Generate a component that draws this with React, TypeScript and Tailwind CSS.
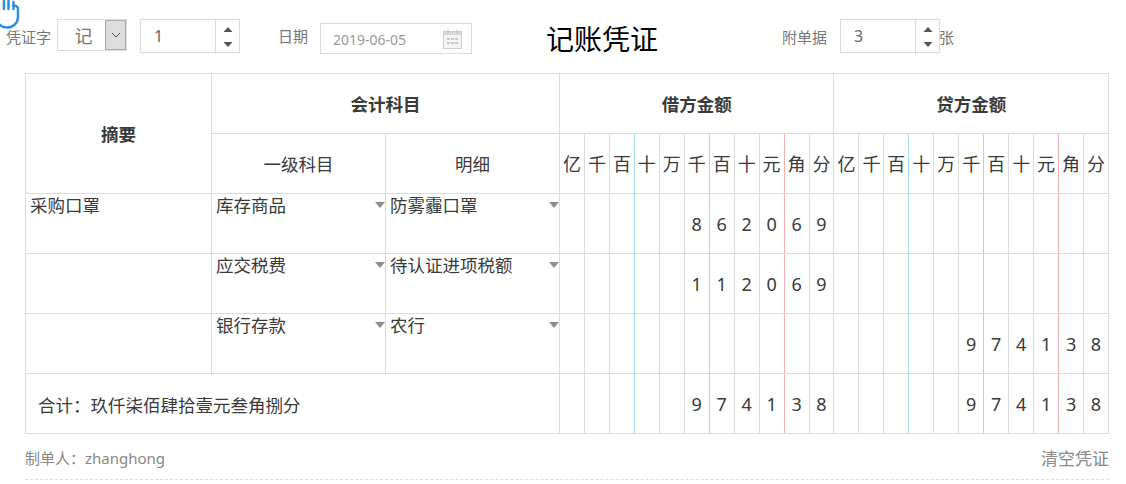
const font = "font-['Noto_Sans','Noto_Sans_CJK_SC',sans-serif]";
const blue = new Set([2, 5]);
const red = new Set([8]);
const unitNames = ['亿', '千', '百', '十', '万', '千', '百', '十', '元', '角', '分'];

function borderFor(i: number) {
  const k = i % 11;
  if (blue.has(k)) return 'border-r-[#a6d8f5]';
  if (red.has(k)) return 'border-r-[#f3b0b0]';
  return '';
}

function DigitCells({ values }: { values: string }) {
  const chars = Array.from({ length: 22 }, (_, i) => values[i] ?? ' ');
  return (
    <>
      {chars.map((c, i) => (
        <td key={i} className={`border border-[#dcdcdc] p-0 pt-[2px] text-center text-[18px] text-[#3a3a3a] ${borderFor(i)}`}>
          {c.trim() && <span>{c}</span>}
        </td>
      ))}
    </>
  );
}

function Spinner() {
  return (
    <div className="mb-[-2px] flex h-[34px] w-[24px] flex-col items-center justify-between border-l border-[#dcdcdc] pb-[7px] pt-[7px]">
      <svg width="10" height="5" viewBox="0 0 10 5"><path d="M5 0 9.500 5H0.500Z" fill="#555" /></svg>
      <svg width="10" height="5" viewBox="0 0 10 5"><path d="M0.500 0H9.500L5 5Z" fill="#555" /></svg>
    </div>
  );
}

function NumberBox({ value }: { value: string }) {
  return (
    <div className="flex h-[34px] w-[100px] items-center justify-between border border-[#dcdcdc] pl-[13px] text-[16px] text-[#666]">
      <span>{value}</span>
      <Spinner />
    </div>
  );
}

function Calendar() {
  return (
    <svg width="19" height="20" viewBox="0 0 19 20" fill="none">
      <rect x="0.500" y="2.500" width="18" height="17" fill="#f4f4f4" stroke="#cfcfcf" />
      <rect x="1" y="3" width="17" height="3" fill="#d8d8d8" />
      <path d="M5 0.500V4M14 0.500V4" stroke="#bdbdbd" />
      <path d="M4 9h3v2H4zM8 9h3v2H8zM12 9h3v2h-3zM4 13h3v2H4zM8 13h3v2H8zM12 13h3v2h-3z" fill="#c9c9c9" />
    </svg>
  );
}

function Caret() {
  return (
    <svg className="absolute right-0 top-[8px]" width="10" height="6" viewBox="0 0 10 6">
      <path d="M0 0H10L5 6Z" fill="#8e8e8e" />
    </svg>
  );
}

function SubjectCell({ text }: { text: string }) {
  return (
    <td className="relative border border-[#dcdcdc] p-0 pl-[4px] align-top text-[17.5px] leading-[22px] text-[#3a3a3a]">
      {text}
      <Caret />
    </td>
  );
}

const rows = [
  { summary: '采购口罩', a: '库存商品', b: '防雾霾口罩', digits: '     862069           ' },
  { summary: '', a: '应交税费', b: '待认证进项税额', digits: '     112069           ' },
  { summary: '', a: '银行存款', b: '农行', digits: '                974138' },
];

export default function App() {
  return (
    <div className={`relative h-[484px] w-[1126px] overflow-hidden bg-white ${font}`}>
      <svg className="absolute left-0 top-0" width="24" height="32" viewBox="0 0 24 32" fill="none" stroke="#2f8fe0" strokeWidth="2.500" strokeLinecap="round" strokeLinejoin="round">
        <path d="M-1 24C1 26.500 4 27.500 7 27.500C13 27.500 18 23 18 17V9C18 6 15 5.500 13.500 6" />
        <path d="M4 -2V9M8.500 -2V9M13.500 2V9" />
      </svg>

      <div className="flex h-[73px] items-start pt-[18px]">
        <span className="ml-[6px] mt-[9px] text-[15px] leading-[20px] text-[#777]">凭证字</span>
        <div className="ml-[6px] mt-[1px] flex h-[32px] w-[70px] border border-[#dcdcdc]">
          <span className="flex-1 pl-[4px] pt-[1px] text-center text-[18px] leading-[30px] text-[#777]">记</span>
          <div className="flex w-[21px] items-center justify-center border border-[#aaa] bg-[#dddddd]">
            <svg width="10" height="6" viewBox="0 0 10 6" fill="none"><path d="M1 1 5 5 9 1" stroke="#555" /></svg>
          </div>
        </div>
        <div className="ml-[13px] mt-[1px]"><NumberBox value="1" /></div>
        <span className="ml-[38px] mt-[8px] text-[15px] leading-[20px] text-[#777]">日期</span>
        <div className="ml-[12px] mt-[5px] flex h-[31px] w-[152px] items-center justify-between border border-[#dcdcdc] pl-[12px] pr-[9px] pt-[1px] text-[14px] text-[#999]">
          <span>2019-06-05</span>
          <Calendar />
        </div>
        <h1 className="ml-[74px] mt-[2px] text-[28px] font-normal leading-[38px] text-black">记账凭证</h1>
        <span className="ml-[124px] mt-[9px] text-[15px] leading-[20px] text-[#777]">附单据</span>
        <div className="ml-[13px] mt-[1px]"><NumberBox value="3" /></div>
        <span className="ml-[-1px] mt-[9px] text-[15px] leading-[20px] text-[#777]">张</span>
      </div>

      <div className="mx-[25px] w-[1084px]">
        <table className="w-[1084px] table-fixed border-collapse">
          <colgroup>
            <col className="w-[186px]" />
            <col className="w-[174px]" />
            <col className="w-[174px]" />
            {Array.from({ length: 22 }, (_, i) => <col key={i} />)}
          </colgroup>
          <thead>
            <tr className="h-[60px]">
              <th rowSpan={2} className="border border-[#dcdcdc] pt-[2px] text-[17.5px] font-bold text-[#3a3a3a]">摘要</th>
              <th colSpan={2} className="border border-[#dcdcdc] pt-[1px] text-[17.5px] font-bold text-[#3a3a3a]">会计科目</th>
              <th colSpan={11} className="border border-[#dcdcdc] pt-[1px] text-[17.5px] font-bold text-[#3a3a3a]">借方金额</th>
              <th colSpan={11} className="border border-[#dcdcdc] pt-[1px] text-[17.5px] font-bold text-[#3a3a3a]">贷方金额</th>
            </tr>
            <tr className="h-[60px]">
              <th className="border border-[#dcdcdc] pt-[2px] text-[17.5px] font-normal text-[#3a3a3a]">一级科目</th>
              <th className="border border-[#dcdcdc] pt-[2px] text-[17.5px] font-normal text-[#3a3a3a]">明细</th>
              {[...unitNames, ...unitNames].map((u, i) => (
                <th key={i} className={`border border-[#dcdcdc] p-0 pt-[2px] text-[18px] font-normal text-[#3a3a3a] ${borderFor(i)}`}>{u}</th>
              ))}
            </tr>
          </thead>
          <tbody>
            {rows.map((r, i) => (
              <tr key={i} className="h-[60px]">
                <td className="border border-[#dcdcdc] p-0 pl-[4px] align-top text-[17.5px] leading-[22px] text-[#3a3a3a]">{r.summary}</td>
                <SubjectCell text={r.a} />
                <SubjectCell text={r.b} />
                <DigitCells values={r.digits} />
              </tr>
            ))}
            <tr className="h-[60px]">
              <td colSpan={3} className="border border-[#dcdcdc] pl-[12px] pt-[3px] text-[17.5px] text-[#3a3a3a]">合计：玖仟柒佰肆拾壹元叁角捌分</td>
              <DigitCells values="     974138     974138" />
            </tr>
          </tbody>
        </table>
        <div className="flex h-[46px] items-center justify-between border-b border-dashed border-[#dcdcdc] text-[#888]">
          <span className="pt-[3px] text-[15px]">制单人：zhanghong</span>
          <span className="pt-[4px] text-[17px]">清空凭证</span>
        </div>
      </div>
    </div>
  );
}
